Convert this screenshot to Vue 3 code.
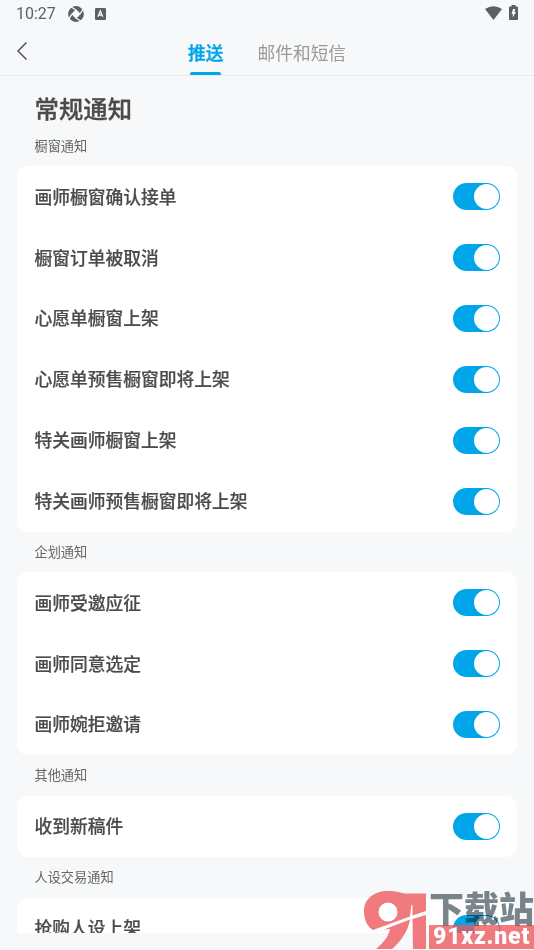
<script setup>
const groups = [
  { title: '橱窗通知', items: ['画师橱窗确认接单', '橱窗订单被取消', '心愿单橱窗上架', '心愿单预售橱窗即将上架', '特关画师橱窗上架', '特关画师预售橱窗即将上架'] },
  { title: '企划通知', items: ['画师受邀应征', '画师同意选定', '画师婉拒邀请'] },
  { title: '其他通知', items: ['收到新稿件'] },
  { title: '人设交易通知', items: ['抢购人设上架'] },
]
</script>

<template>
  <div class="screen">
    <header class="status">
      <span class="time">10:27</span>
      <svg class="aperture" viewBox="0 0 16 16"><circle cx="8" cy="8" r="5.500" fill="none" stroke="#5d5e60" stroke-width="4.800"/><path d="M8 3.300L12.700 8L8 12.700L3.300 8Z" fill="#f6f8fa"/><path d="M3.300 1L8 4M15 3.300L12 8M12.700 15L8 12M1 12.700L4 8" stroke="#f6f8fa" stroke-width="1.300"/></svg>
      <svg class="abox" viewBox="0 0 11 12"><rect width="11" height="12" rx="1.2" fill="#5d5e60"/><path d="M3 8.8L5.3 3L7.8 8.8M3.8 7H7" fill="none" stroke="#f6f7f9" stroke-width="1.3"/></svg>
      <span class="grow"></span>
      <svg class="wifi" viewBox="0 0 17 14"><path d="M0 3Q8.500-2.500 17 3L8.500 14Z" fill="#5d5e60"/></svg>
      <svg class="battery" viewBox="0 0 9 15"><path d="M2.500 0H6.500V1.500H8Q9 1.500 9 2.500V14Q9 15 8 15H1Q0 15 0 14V2.500Q0 1.500 1 1.500H2.500Z" fill="#5d5e60"/><path d="M4 4H6.300L5.500 7H7L3.800 12.500V9H2.500Z" fill="#f6f7f9"/></svg>
    </header>
    <nav class="nav">
      <svg class="back" viewBox="0 0 12 20"><path d="M10.500 1.500L2 10L10.500 18.500" fill="none" stroke="#555" stroke-width="1.500"/></svg>
      <div class="tab active">推送</div>
      <div class="tab">邮件和短信</div>
    </nav>
    <main class="content">
      <h1>常规通知</h1>
      <section v-for="g in groups" :key="g.title">
        <h2>{{ g.title }}</h2>
        <div class="card">
          <div v-for="item in g.items" :key="item" class="row">
            <span class="label">{{ item }}</span>
            <span class="switch"><i></i></span>
          </div>
        </div>
      </section>
    </main>
    <div class="mark">
      <svg class="emblem" viewBox="0 0 64 60"><path fill-rule="evenodd" d="M24 1C10 1 0 9 0 21C0 31 4 37 9 40L46 26.500L47.500 14V8C41 3 34 1 24 1ZM24 12.500A9.500 9.500 0 1 1 24 31.500A9.500 9.500 0 1 1 24 12.500Z"/><path d="M20 39.500L46 29.500C44 42 36 52 28 59H12C20 52 25 46 26 39Z"/><path d="M38 3.500H62V21L48.500 25.500V15H46V10Z"/><path d="M48.500 29L62 25V59H49Z"/></svg>
      <div class="words"><div class="name">下载站</div><div class="site"><span>91xz.net</span></div></div>
    </div>
  </div>
</template>

<style>
body { background: #f6f7f9; }
</style>
<style scoped>
.screen { position: relative; width: 534px; height: 950px; overflow: hidden; background: #f6f8fa; font-family: "Noto Sans CJK SC", sans-serif; color: #4b4b4b; }
.status { display: flex; align-items: center; height: 27px; padding: 0 16px 0 16px; box-sizing: border-box; }
.time { width: 52px; font: 16px/28px Roboto, sans-serif; color: #606163; }
.aperture { width: 16px; height: 16px; }
.abox { width: 11px; height: 12px; margin-left: 11px; }
.grow { flex: 1; }
.wifi { width: 17px; height: 14px; margin-bottom: 2px; }
.battery { width: 9px; height: 15px; margin: 0 0 2px 7px; }
.nav { display: flex; height: 49px; box-sizing: border-box; border-bottom: 1px solid #eaebed; }
.back { width: 12px; height: 20px; margin: 14px 160px 0 16px; }
.tab { position: relative; font-size: 17.7px; line-height: 50px; height: 48px; color: #999; margin-right: 34.200px; white-space: nowrap; }
.active { color: #00a6e9; font-weight: 500; -webkit-text-stroke: .4px #00a6e9; }
.active::after { content: ""; position: absolute; left: 2px; bottom: 0; width: 31px; height: 3px; border-radius: 2px 2px 0 0; background: #00a6e9; }
.content { height: 857px; overflow: hidden; padding: 0 17px; }
h1 { margin: 0 0 0 17.500px; height: 49.600px; font-size: 24.400px; line-height: 64px; font-weight: 500; -webkit-text-stroke: .3px #4b4b4b; }
h2 { margin: 0 0 0 17.500px; height: 40.900px; font-size: 13.200px; line-height: 40.400px; font-weight: 400; color: #666; }
.card { background: #fff; border-radius: 11px; }
.row { display: flex; align-items: center; justify-content: space-between; height: 60.850px; padding: 0 17px 0 17.500px; font-size: 17.750px; font-weight: 500; -webkit-text-stroke: .2px #4b4b4b; }
.label { padding-bottom: 2.400px; }
.switch { display: flex; justify-content: flex-end; box-sizing: border-box; width: 47px; height: 27px; padding: 1px; border-radius: 14px; background: #00a6e9; }
.switch i { width: 25px; height: 25px; border-radius: 50%; background: #fff; }
.mark { position: absolute; left: 364px; top: 890px; width: 170px; height: 60px; display: flex; }
.emblem { width: 64px; height: 60px; fill: #f07a7e; }
.words { margin-left: 1px; width: 105px; }
.name { height: 35px; font-size: 35px; line-height: 33px; font-weight: 900; color: #7b868c; white-space: nowrap; mix-blend-mode: multiply; }
.site { height: 24px; background: rgba(237, 86, 91, .78); color: #fff; font: 900 23px/24px Roboto, sans-serif; letter-spacing: .8px; padding-left: 4px; white-space: nowrap; }
.site span { display: inline-block; }
</style>
